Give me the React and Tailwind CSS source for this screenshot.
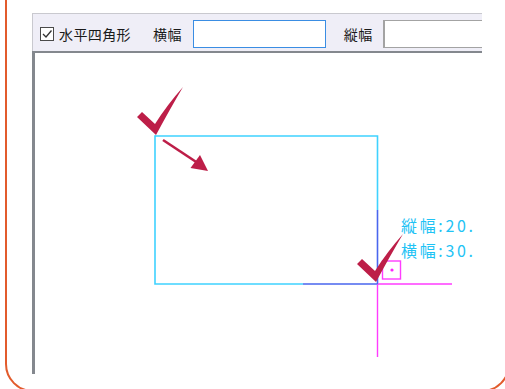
import React from 'react'

const CRIMSON = '#bd1e48'

function CheckMark({ x, y }) {
  // x, y = bottom vertex of the tick
  return (
    <path
      transform={`translate(${x} ${y})`}
      d="M-18,-17 L-13,-22 L0,-10 Q12,-29 28,-47 Q15,-25 1,1 Z"
      fill={CRIMSON}
    />
  )
}

function Toolbar() {
  return (
    <div className="flex h-[38px] items-center whitespace-nowrap border-l border-t border-[#c9c9cf] bg-[#efeef7] pt-[3px] text-[14px] text-[#1a1a1a]" style={{ fontFamily: '"Noto Sans CJK JP", "Noto Sans", sans-serif' }}>
      <div className="ml-[7px] flex h-[14px] w-[14px] shrink-0 items-center justify-center border border-[#4a4a4a] bg-white">
        <svg width="12" height="12" viewBox="0 0 12 12">
          <path d="M2 6 L5 9 L10.5 2.5" fill="none" stroke="#333" strokeWidth="1.3" />
        </svg>
      </div>
      <span className="ml-[5px] shrink-0 tracking-[0.4px]">水平四角形</span>
      <span className="ml-[22px] shrink-0 tracking-[0.4px]">横幅</span>
      <div className="ml-[11px] h-[28px] w-[133px] shrink-0 border border-[#3a8de3] bg-white" />
      <span className="ml-[18px] shrink-0 tracking-[0.4px]">縦幅</span>
      <div className="ml-[10px] h-[28px] w-[140px] shrink-0 border border-l-2 border-[#a3a3a3] bg-white" />
    </div>
  )
}

function Canvas() {
  return (
    <div className="h-[323px] border-l-[3px] border-t-2 border-[#84888e] bg-white">
      <svg width="447" height="321" viewBox="35 53 447 321" className="block">
        {/* rectangle */}
        <path d="M155,136 H377.5 V210" fill="none" stroke="#3fd2ff" strokeWidth="1.6" />
        <path d="M155,135.2 V284 H303" fill="none" stroke="#3fd2ff" strokeWidth="1.6" />
        <path d="M377.5,210 V284 H303" fill="none" stroke="#4a66ee" strokeWidth="1.6" />
        {/* magenta guide */}
        <path d="M378,284 H452 M377.5,284.5 V357" fill="none" stroke="#ff3cff" strokeWidth="1.4" />
        <rect x="382.5" y="261" width="18" height="18" fill="none" stroke="#ff3cff" strokeWidth="1.4" />
        <circle cx="392" cy="270" r="1.6" fill="#ff20ff" />
        {/* size labels */}
        <g fill="#1fc3f5" fontSize="16" style={{ fontFamily: '"Noto Sans CJK JP", sans-serif', fontWeight: 400 }}>
          <text x="401" y="232" textLength="72" lengthAdjust="spacing">縦幅:20.</text>
          <text x="401" y="257" textLength="72" lengthAdjust="spacing">横幅:30.</text>
        </g>
        {/* annotations */}
        <CheckMark x={155} y={134} />
        <path d="M163,140 L197,162.5" stroke={CRIMSON} strokeWidth="2.6" />
        <path d="M200,155 L208,171 L190.5,168 Z" fill={CRIMSON} />
        <CheckMark x={375} y={281} />
      </svg>
    </div>
  )
}

export default function App() {
  return (
    <div className="h-[389px] w-[505px] overflow-hidden bg-white">
      <div className="-mt-[40px] ml-[5px] h-[432px] w-[505px] rounded-[28px] border-2 border-[#e25b2c] pl-[25px] pt-[51px]">
        <div className="w-[450px] overflow-hidden">
          <Toolbar />
          <Canvas />
        </div>
      </div>
    </div>
  )
}
